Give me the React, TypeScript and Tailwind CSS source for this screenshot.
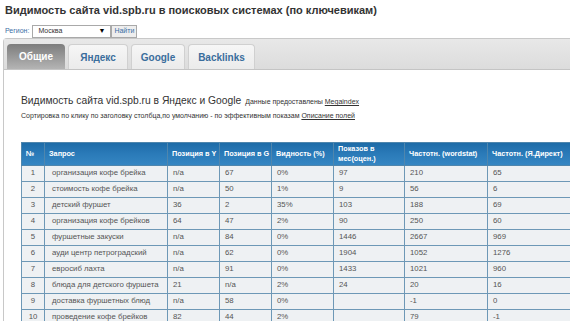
const rows: string[][] = [
  ['1', 'организация кофе брейка', 'n/a', '67', '0%', '97', '210', '65'],
  ['2', 'стоимость кофе брейка', 'n/a', '50', '1%', '9', '56', '6'],
  ['3', 'детский фуршет', '36', '2', '35%', '103', '188', '69'],
  ['4', 'организация кофе брейков', '64', '47', '2%', '90', '250', '60'],
  ['5', 'фуршетные закуски', 'n/a', '84', '0%', '1446', '2667', '969'],
  ['6', 'ауди центр петроградский', 'n/a', '62', '0%', '1904', '1052', '1276'],
  ['7', 'евросиб лахта', 'n/a', '91', '0%', '1433', '1021', '960'],
  ['8', 'блюда для детского фуршета', '21', 'n/a', '2%', '24', '20', '16'],
  ['9', 'доставка фуршетных блюд', 'n/a', '58', '0%', '', '-1', '0'],
  ['10', 'проведение кофе брейков', '82', '44', '2%', '', '79', '-1'],
];

const cols = [23, 123, 52, 52, 62, 71, 83, 85];
const heads = ['№', 'Запрос', 'Позиция в Y', 'Позиция в G', 'Видность (%)', 'Показов в мес(оцен.)', 'Частотн. (wordstat)', 'Частотн. (Я.Директ)'];

const tabs = ['Общие', 'Яндекс', 'Google', 'Backlinks'];
const tabWidths = [58, 60, 54, 67];

export default function App() {
  return (
    <div className="w-[570px] h-[321px] overflow-hidden bg-white font-['Liberation_Sans',Arial,sans-serif] text-[#333]">
      <h1 className="pl-[5px] pt-[3px] text-[11px] font-bold leading-[15px] text-[#333] whitespace-nowrap">
        Видимость сайта vid.spb.ru в поисковых системах (по ключевикам)
      </h1>

      <div className="flex items-center mt-[7px] pl-[5px] h-[13px]">
        <span className="text-[7px] text-[#3b6ea5] mr-[3px]">Регион:</span>
        <div className="flex items-center justify-between w-[79px] h-[13px] border border-[#a9a9a9] bg-white px-[5px] text-[7px] text-[#333]">
          <span>Москва</span>
          <span className="text-[7px] text-black">▼</span>
        </div>
        <div className="flex items-center h-[13px] px-[2px] border border-[#a9a9a9] bg-[#eeeeee] text-[7px] text-[#3b6ea5]">
          Найти
        </div>
      </div>

      <div className="ml-[3px] border-l border-t border-[#c8c8c8] rounded-tl-[4px]">
        <div className="flex items-end h-[31px] pl-[3px] gap-[3px] border-b border-[#c4c4c4] bg-gradient-to-b from-[#e8e8e8] to-[#dcdcdc]">
          {tabs.map((t, i) => (
            <div
              key={t}
              className={
                i === 0
                  ? 'flex items-center justify-center h-[25px] rounded-t-[4px] bg-gradient-to-b from-[#7d7d7d] to-[#b4b4b4] text-white text-[10px] font-bold'
                  : 'flex items-center justify-center h-[25px] rounded-t-[4px] border border-b-0 border-[#d0d0d0] bg-gradient-to-b from-[#f6f6f6] to-[#ebebeb] text-[#3a6d9c] text-[10px] font-bold'
              }
              style={{ width: tabWidths[i] }}
            >
              {t}
            </div>
          ))}
        </div>

        <div className="pl-[17px] pt-[23px]">
          <div className="flex items-baseline whitespace-nowrap">
            <span className="text-[10.3px] text-[#333]">
              Видимость сайта vid.spb.ru в Яндекс и Google
            </span>
            <span className="ml-[4px] text-[7px] text-[#333]">
              Данные предоставлены <span className="underline">Megaindex</span>
            </span>
          </div>
          <div className="mt-[3px] text-[7px] text-[#333] whitespace-nowrap">
            Сортировка по клику по заголовку столбца,по умолчанию - по эффективным показам{' '}
            <span className="underline">Описание полей</span>
          </div>

          <table className="mt-[20px] table-fixed border-collapse w-[550px] text-[7.8px]">
            <colgroup>
              {cols.map((w, i) => (
                <col key={i} style={{ width: w }} />
              ))}
            </colgroup>
            <thead>
              <tr className="h-[23px] bg-gradient-to-b from-[#1c6aa6] via-[#2a7ab8] to-[#3586c2]">
                {heads.map((h, i) => (
                  <th
                    key={h}
                    className={
                      'border border-[#4f86ad] px-[4px] py-0 text-left font-bold text-white leading-[10px] text-[7.3px]' +
                      (i === 5 ? '' : ' whitespace-nowrap')
                    }
                  >
                    {h}
                  </th>
                ))}
              </tr>
            </thead>
            <tbody>
              {rows.map((r) => (
                <tr key={r[0]} className="h-[16px] bg-[#eef1f3]">
                  {r.map((c, j) => (
                    <td
                      key={j}
                      className={
                        'border border-[#6d98b6] py-0 leading-[14px] text-[#555] whitespace-nowrap' +
                        (j === 0 ? ' text-center px-[2px]' : j === 1 ? ' px-[7px]' : ' px-[5px]')
                      }
                    >
                      {c}
                    </td>
                  ))}
                </tr>
              ))}
            </tbody>
          </table>
        </div>
      </div>
    </div>
  );
}
